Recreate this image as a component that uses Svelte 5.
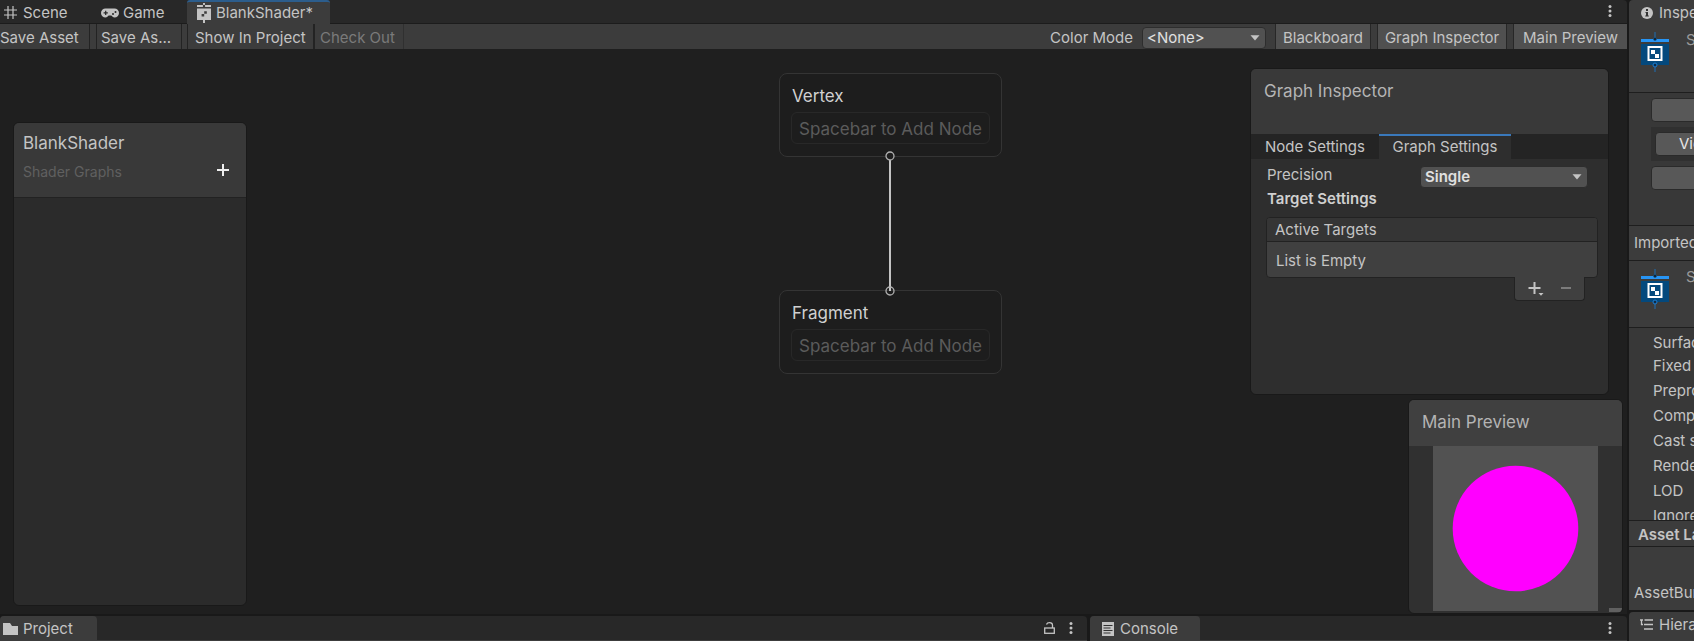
<script>
  const fields = [
    'Fixed function', 'Preprocess only', 'Compiled code', 'Cast shadows',
    'Render queue', 'LOD', 'Ignore projector'
  ];
  const nodes = [
    { name: 'Vertex', y: 24 },
    { name: 'Fragment', y: 241 }
  ];
  let colorMode = $state('<None>');
  let precision = $state('Single');
</script>

{#snippet kebab()}
  <svg width="4" height="12" viewBox="0 0 4 12" fill="#c4c4c4" aria-hidden="true">
    <circle cx="2" cy="1.6" r="1.5" /><circle cx="2" cy="6" r="1.5" /><circle cx="2" cy="10.4" r="1.5" />
  </svg>
{/snippet}

{#snippet arrow()}
  <svg class="arrow" width="10" height="6" viewBox="0 0 10 6" fill="#c4c4c4" aria-hidden="true">
    <path d="M0.5 0.3h9L5 5.6z" />
  </svg>
{/snippet}

{#snippet shaderIcon()}
  <svg width="28" height="40" viewBox="0 0 28 40" aria-hidden="true">
    <path d="M14 0v8M14 33v7" stroke="#1c6fb5" stroke-width="1" />
    <rect y="7" width="28" height="3" fill="#2795f5" />
    <rect y="12" width="28" height="21" fill="#04497d" />
    <circle cx="14" cy="7" r="1.500" fill="#0d1a26" stroke="#155a94" stroke-width="0.700" />
    <circle cx="14" cy="33" r="2" fill="#0d2a45" stroke="#1c7fd5" />
    <rect x="7.5" y="15" width="13" height="13" fill="#04497d" stroke="#fff" stroke-width="2" />
    <path d="M10 18h4v4h-4zM14 22h4v4h-4z" fill="#fff" />
  </svg>
{/snippet}

<div class="editor">
  <main class="workspace">
    <section class="graph">
      <nav class="tabs">
        <button class="tab scene">
          <svg width="13" height="13" viewBox="0 0 13 13" stroke="#c4c4c4" stroke-width="1.2" aria-hidden="true">
            <path d="M4 0v13M9 0v13M0 4h13M0 9h13" />
          </svg>
          Scene
        </button>
        <button class="tab game">
          <svg width="18" height="10" viewBox="0 0 18 10" aria-hidden="true">
            <path d="M4.5 0.5h9a4.5 4.5 0 0 1 0 9c-1.6 0-2.4-1.3-3.2-2H7.7c-.8.700-1.600 2-3.200 2a4.500 4.500 0 0 1 0-9z" fill="#c4c4c4" />
            <path d="M4.700 2.700v4.200M2.600 4.800h4.200" stroke="#282828" stroke-width="1.200" />
            <circle cx="12" cy="6" r="1" fill="#282828" /><circle cx="14.500" cy="4" r="1" fill="#282828" />
          </svg>
          Game
        </button>
        <button class="tab active">
          <svg width="14" height="20" viewBox="0 0 14 20" aria-hidden="true">
            <path d="M6 0h2v3H6zM6 17h2v3H6zM0 2h14v2H0zM0 5.500h14v11.500H0z" fill="#c4c4c4" />
            <path d="M7.200 8.200h2.600v2.600H7.200zM4.600 11h2.600v2.600H4.600z" fill="#3c3c3c" />
            <circle cx="7" cy="3" r="1.200" fill="#3c3c3c" />
          </svg>
          BlankShader*
        </button>
        <button class="more" aria-label="Window options">{@render kebab()}</button>
      </nav>

      <div class="toolbar">
        <button class="tool first">Save Asset</button>
        <button class="tool save-as">Save As...</button>
        <button class="tool show">Show In Project</button>
        <button class="tool" disabled>Check Out</button>
        <span class="spacer"></span>
        <label for="color-mode">Color Mode</label>
        <span class="select mode">
          <select id="color-mode" bind:value={colorMode}>
            <option>&lt;None&gt;</option>
            <option>Category</option>
          </select>
          {@render arrow()}
        </span>
        <button class="toggle">Blackboard</button>
        <button class="toggle">Graph Inspector</button>
        <button class="toggle last">Main Preview</button>
      </div>

      <div class="canvas">
        <aside class="window blackboard">
          <header>
            <h2>BlankShader</h2>
            <p>Shader Graphs</p>
            <button class="add" aria-label="Add property">
              <svg width="12" height="12" viewBox="0 0 12 12" stroke="#eee" stroke-width="2" aria-hidden="true"><path d="M6 0v12M0 6h12" /></svg>
            </button>
          </header>
        </aside>

        <svg class="edge" width="10" height="145" viewBox="0 0 10 145" aria-hidden="true">
          <path d="M5 9v131" stroke="#c4c4c4" stroke-width="2" />
          <circle cx="5" cy="5" r="4" fill="#1e1e1e" stroke="#b0b0b0" stroke-width="1.300" />
          <circle cx="5" cy="140" r="4" fill="none" stroke="#b0b0b0" stroke-width="1.300" />
        </svg>
        {#each nodes as node}
          <article class="node" style="top: {node.y}px">
            <h3>{node.name}</h3>
            <p>Spacebar to Add Node</p>
          </article>
        {/each}

        <aside class="window inspector">
          <header><h2>Graph Inspector</h2></header>
          <nav>
            <button>Node Settings</button>
            <button class="on">Graph Settings</button>
          </nav>
          <div class="settings">
            <div class="row">
              <label for="precision">Precision</label>
              <span class="select precision">
                <select id="precision" bind:value={precision}>
                  <option>Single</option>
                  <option>Half</option>
                </select>
                {@render arrow()}
              </span>
            </div>
            <h4>Target Settings</h4>
            <div class="targets">
              <div class="head">Active Targets</div>
              <div class="empty">List is Empty</div>
            </div>
            <div class="foot">
              <button aria-label="Add target">
                <svg width="16" height="14" viewBox="0 0 16 14" aria-hidden="true">
                  <path d="M6.500 0v12M0.500 6h12" stroke="#c4c4c4" stroke-width="2" /><path d="M10.500 11h5L13 13.800z" fill="#c4c4c4" />
                </svg>
              </button>
              <button aria-label="Remove target">
                <svg width="10" height="14" viewBox="0 0 10 14" aria-hidden="true"><path d="M0 6h10" stroke="#7c7c7c" stroke-width="2" /></svg>
              </button>
            </div>
          </div>
        </aside>

        <aside class="window preview">
          <header><h2>Main Preview</h2></header>
          <svg class="sphere" viewBox="0 0 165 165" aria-hidden="true">
            <rect width="165" height="165" fill="#525252" />
            <circle cx="82.500" cy="82.500" r="62.800" fill="#f0f" />
          </svg>
          <span class="grip"></span>
        </aside>
      </div>
    </section>

    <div class="dock">
      <section class="pane project">
        <button class="tab active">
          <svg width="15" height="12" viewBox="0 0 15 12" fill="#c4c4c4" aria-hidden="true"><path d="M0 0h7l2 3h6v9H0z" /></svg>
          Project
        </button>
        <button class="lock" aria-label="Lock">
          <svg width="11" height="12" viewBox="0 0 11 12" fill="none" stroke="#c4c4c4" stroke-width="1.300" aria-hidden="true">
            <rect x="0.700" y="6" width="9.600" height="5.300" /><path d="M2.500 2.500C3 1 4 .7 5.500 .7c2 0 3 1 3 2.600V6" />
          </svg>
        </button>
        <button class="more" aria-label="Project options">{@render kebab()}</button>
      </section>
      <section class="pane console">
        <button class="tab active">
          <svg width="12" height="14" viewBox="0 0 12 14" aria-hidden="true">
            <path d="M0 0h12v14H0z" fill="#c4c4c4" /><path d="M1.500 3.500h9M1.500 6h7M1.500 8.500h9M1.500 11h7" stroke="#333" />
          </svg>
          Console
        </button>
        <button class="more" aria-label="Console options">{@render kebab()}</button>
      </section>
    </div>
  </main>

  <aside class="side">
    <section class="details">
      <button class="side-tab">
        <svg width="12" height="12" viewBox="0 0 12 12" aria-hidden="true">
          <circle cx="6" cy="6" r="6" fill="#c4c4c4" />
          <path d="M5 2h2v2H5zM4.500 5H7v4H5V6h-.5zM4.200 8.600h3.600v1H4.200z" fill="#333" />
        </svg>
        Inspector
      </button>
      <div class="asset">{@render shaderIcon()}<span>Shader</span></div>
      <div class="actions">
        <button aria-label="Open shader editor"></button>
        <div class="well"><button>View Generated Shader</button></div>
        <button aria-label="Copy shader"></button>
      </div>
      <div class="imported">Imported Object</div>
      <div class="asset second">{@render shaderIcon()}<span>Shader</span></div>
      <ul>
        <li class="surface">Surface shader</li>
        {#each fields as field}<li>{field}</li>{/each}
      </ul>
      <h4>Asset Labels</h4>
      <div class="bundle">AssetBundle</div>
    </section>
    <section class="hierarchy">
      <svg width="13" height="11" viewBox="0 0 13 11" stroke="#c4c4c4" stroke-width="1.300" fill="none" aria-hidden="true">
        <path d="M0 1h3M4.500 1H13M4 5.500h9M4 10h9M1.500 1v4.500H3" />
      </svg>
      Hierarchy
    </section>
  </aside>
</div>

<style>
  :global(body) { margin: 0; background: #191919; }
  * { box-sizing: border-box; }
  .editor {
    display: grid;
    grid-template-columns: minmax(0, 1fr) 65px;
    gap: 2px;
    height: 100vh;
    overflow: hidden;
    background: #191919;
    color: #c4c4c4;
    font: 15px/20px Inter, sans-serif;
  }
  button, select { font: inherit; color: inherit; border: 0; margin: 0; padding: 0; background: none; white-space: nowrap; }
  h2, h3, h4, p, ul { margin: 0; padding: 0; font: inherit; }
  svg { display: block; flex: none; }
  .workspace, .graph, .side { display: flex; flex-direction: column; min-width: 0; min-height: 0; }
  .workspace { gap: 2px; }
  .graph { flex: 1; }

  .tabs { display: flex; height: 24px; background: #282828; border-bottom: 1px solid #1c1c1c; border-radius: 0 4px 0 0; }
  .tab { display: flex; align-items: center; padding-top: 2px; }
  .scene { padding-left: 4px; gap: 6px; width: 101px; }
  .game { gap: 4px; width: 86px; }
  .tabs .active { width: 143px; height: 24px; padding: 0 0 0 10px; gap: 5px; border-top: 2px solid #2c5d8c; border-radius: 3px 3px 0 0; background: #3c3c3c; }
  .more { margin-left: auto; padding: 0 15px; }
  .tabs .more { padding-bottom: 2px; }

  .toolbar { display: flex; align-items: stretch; height: 25px; background: #3c3c3c; }
  .tool { padding: 3px 6px 0; border-right: 1px solid #232323; text-align: left; }
  .first { padding-left: 0; width: 90px; margin-right: 6px; }
  .save-as { width: 86px; border-left: 1px solid #232323; margin-right: 5px; padding: 3px 4px 0; }
  .show { width: 128px; border-left: 1px solid #232323; padding-left: 7px; border-right-width: 2px; }
  .tool:disabled { color: #7a7a7a; width: 89px; padding-left: 5px; border-color: #303030; }
  .spacer { flex: 1; }
  .toolbar label { padding: 4px 9px 0 0; }
  .select { position: relative; display: flex; align-items: center; }
  .select select { appearance: none; width: 100%; height: 100%; padding: 0 4px; border: 1px solid #2d2d2d; border-radius: 4px; background: #515151; color: #e0e0e0; }
  .arrow { position: absolute; right: 6px; pointer-events: none; }
  .mode { width: 124px; margin: 3px 9px 0 0; }
  .toggle { width: 96px; padding: 3px 0 0; margin-right: 6px; border: solid #272727; border-width: 0 1px; background: #505050; }
  .toggle:nth-last-child(2) { width: 130px; }
  .last { width: 114px; margin: 0; border-right: 0; }

  .canvas { position: relative; flex: 1; min-height: 0; background: #1f1f1f; overflow: hidden; }
  .window { position: absolute; border: 1px solid #191919; border-radius: 6px; background: #2e2e2e; overflow: hidden; }
  h2 { font-size: 17px; line-height: 22px; color: #b4b4b4; }
  .window header { background: #393939; }
  .blackboard { left: 13px; top: 73px; bottom: 8px; width: 234px; background: #2b2b2b; }
  .blackboard header { display: grid; grid-template-columns: 1fr auto; align-content: start; row-gap: 8px; height: 75px; padding: 9px 17px 0 9px; border-bottom: 1px solid #222; }
  .blackboard h2 { grid-column: 1 / -1; color: #c4c4c4; }
  .blackboard p { font-size: 14px; color: #606060; }
  .add { align-self: start; padding-top: 2px; }

  .node { position: absolute; left: 779px; width: 223px; height: 84px; padding: 11px 11px 0; border: 1px solid #343434; border-radius: 8px; background: #1d1d1d; font-size: 17px; line-height: 22px; }
  .node h3 { padding-left: 1px; color: #d0d0d0; }
  .node p { margin-top: 5px; padding: 5px 0 3px; text-align: center; white-space: nowrap; border: 1px solid #282828; border-radius: 6px; color: #5b5b5b; }
  .edge { position: absolute; z-index: 1; left: 885px; top: 102px; }

  .inspector { right: 18px; top: 19px; width: 359px; height: 327px; }
  .inspector header { height: 65px; padding: 11px 13px; }
  .inspector nav { display: flex; height: 25px; background: #242424; }
  .inspector nav button { width: 128px; padding-top: 0; }
  .inspector nav .on { width: 132px; padding: 0 0 2px; border-top: 2px solid #3a79bb; background: #2e2e2e; }
  .settings { padding: 7px 10px 0 15px; }
  .row { display: flex; justify-content: space-between; height: 22px; padding: 0 10px 0 1px; }
  .row label { line-height: 18px; }
  .precision { width: 168px; height: 22px; font-weight: 600; }
  h4 { font-weight: 600; }
  .settings h4 { padding: 0 1px 8px; line-height: 21px; color: #d0d0d0; }
  .targets { border: 1px solid #222; border-radius: 4px; background: #404040; }
  .head { height: 24px; padding: 2px 8px; border-bottom: 1px solid #222; border-radius: 3px 3px 0 0; background: #353535; }
  .empty { padding: 9px 9px 6px; }
  .foot { display: flex; justify-content: center; gap: 17px; width: 71px; height: 24px; margin: -1px 13px 0 auto; border: 1px solid #222; border-top: 0; border-radius: 0 0 4px 4px; background: #404040; position: relative; }

  .preview { right: 4px; bottom: 0; width: 215px; height: 215px; background: #303030; }
  .preview header { height: 46px; padding: 11px 13px; background: #404040; }
  .sphere { width: 165px; margin: 0 auto; }
  .grip { position: absolute; right: 0; bottom: 1px; width: 13px; height: 4px; background: #606060; }

  .dock { display: grid; grid-template-columns: 1087fr 537fr; gap: 3px; height: 25px; }
  .pane { display: flex; background: #282828; border-bottom: 1px solid #3c3c3c; border-radius: 4px 4px 0 0; overflow: hidden; }
  .pane .active { padding: 2px 0 0 3px; gap: 5px; width: 97px; background: #3c3c3c; border-radius: 0 4px 0 0; }
  .console .active { width: 110px; padding-left: 12px; gap: 6px; }
  .lock { margin-left: auto; }
  .project .more { margin: 0; padding: 0 14px; }

  .side { gap: 2px; white-space: nowrap; }
  .side section { overflow: hidden; background: #3c3c3c; border-radius: 4px 0 0 0; }
  .details { flex: 1; display: flex; flex-direction: column; min-height: 0; }
  .side-tab { display: flex; align-items: center; gap: 6px; height: 26px; padding-left: 12px; flex: none; }
  .asset { display: flex; gap: 17px; height: 67px; padding: 6px 0 0 12px; border-bottom: 1px solid #1e1e1e; color: #9a9a9a; flex: none; }
  .asset span { line-height: 16px; }
  .second { padding-top: 8px; }
  .actions { display: flex; flex-direction: column; gap: 5px; height: 132px; padding: 5px 0 0 22px; background: #383838; flex: none; }
  .actions button { flex: none; width: 300px; height: 24px; border: 1px solid #2a2a2a; border-radius: 4px; background: #585858; color: #e6e6e6; text-align: left; }
  .well { padding: 5px 0 5px 4px; background: #303030; }
  .well .actions button, .well button { padding-left: 23px; }
  .imported { height: 36px; padding: 7px 5px; border-top: 1px solid #1e1e1e; border-bottom: 1px solid #1e1e1e; flex: none; }
  ul { flex: 1; min-height: 0; overflow: hidden; padding: 4px 0 0 24px; list-style: none; background: #383838; line-height: 25px; }
  .surface { line-height: 21px; }
  .side h4 { height: 27px; padding: 4px 9px; border-top: 1px solid #1e1e1e; border-bottom: 1px solid #1e1e1e; flex: none; }
  .bundle { height: 63px; padding: 36px 5px 0; flex: none; }
  .side .hierarchy { display: flex; align-items: center; gap: 6px; height: 29px; padding: 0 0 4px 11px; flex: none; }
</style>
